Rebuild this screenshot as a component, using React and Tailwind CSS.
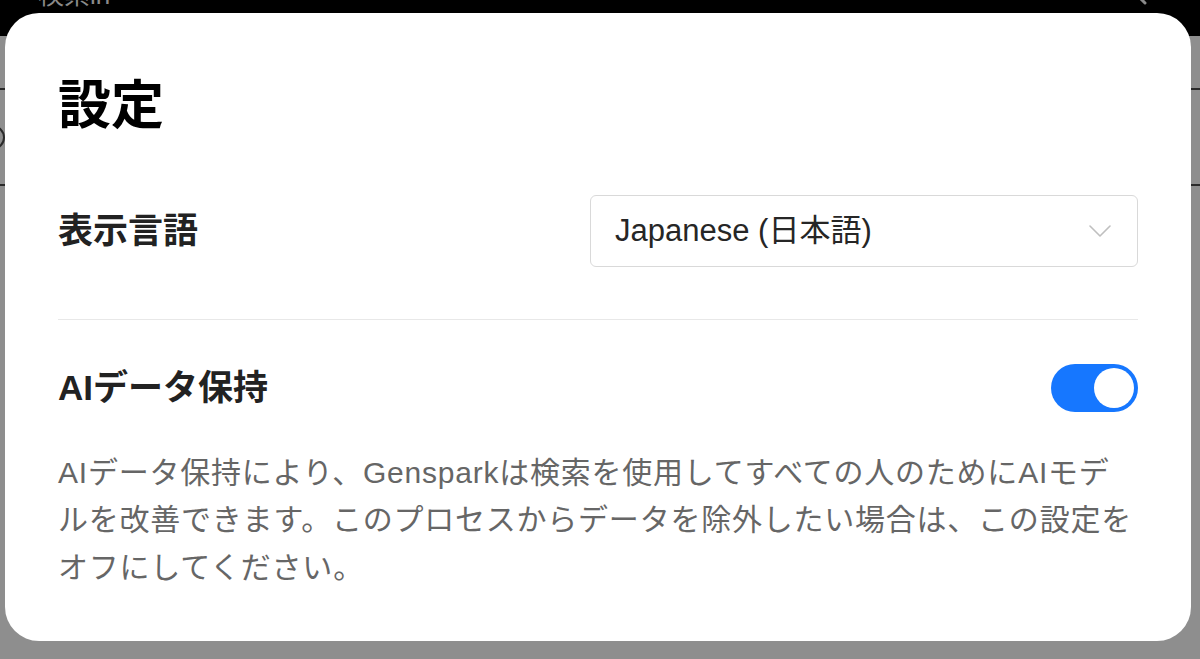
import React from 'react';

const FONT = "font-['Liberation_Sans','Noto_Sans_CJK_JP',sans-serif]";

function Toggle({ on = true }) {
  return (
    <div className={`flex items-center w-[87px] h-[48px] rounded-full px-[4px] ${on ? 'bg-[#1677ff] justify-end' : 'bg-[#d9d9d9] justify-start'}`}>
      <div className="w-[40px] h-[40px] rounded-full bg-white" />
    </div>
  );
}

function LanguageSelect() {
  return (
    <div className="flex items-center justify-between w-[548px] h-[72px] border border-[#d9d9d9] rounded-[6px] pl-[24px] pr-[26px] bg-white">
      <span className="text-[31px] text-[#262626]">Japanese (日本語)</span>
      <svg width="22" height="12" viewBox="0 0 22 12" fill="none">
        <path d="M1 1 L11 11 L21 1" stroke="#bfbfbf" strokeWidth="1.6" strokeLinecap="round" strokeLinejoin="round" />
      </svg>
    </div>
  );
}

export default function App() {
  return (
    <div className={`relative w-[1200px] h-[659px] overflow-hidden bg-[#8e8e8e] ${FONT}`}>
      {/* page behind the overlay */}
      <div className="flex items-start justify-between h-[36px] bg-black overflow-hidden">
        <span className="-mt-[20px] pl-[38px] text-[26px] leading-[30px] text-[#8a8a8a]">検索in</span>
        <svg className="-mt-[30px] mr-[48px]" width="40" height="40" viewBox="0 0 40 40" fill="none">
          <circle cx="16" cy="16" r="12" stroke="#8a8a8a" strokeWidth="3" />
          <path d="M25 25 L33 33" stroke="#8a8a8a" strokeWidth="3" strokeLinecap="round" />
        </svg>
      </div>
      <div className="mt-[52px] flex items-center h-[98px] border-y-2 border-[#2a2a2a]">
        <div className="-ml-[20px] w-[25px] h-[25px] rounded-full border-2 border-[#2a2a2a]" />
      </div>

      {/* settings modal */}
      <div className="absolute left-[5px] top-[13px] w-[1186px] h-[628px] bg-white rounded-[34px] px-[53px] pt-[66px]">
        <h1 className="text-[53px] leading-[53px] font-bold text-black">設定</h1>

        <div className="mt-[63px] flex items-center justify-between">
          <span className="text-[35px] font-bold text-[#222]">表示言語</span>
          <LanguageSelect />
        </div>

        <div className="mt-[52px] h-px bg-[#e8e8e8]" />

        <div className="mt-[42px] flex items-center justify-between">
          <span className="text-[35px] font-bold text-[#222]">AIデータ保持</span>
          <Toggle on />
        </div>

        <p className="mt-[34px] text-[30px] leading-[47.5px] tracking-[0.77px] text-[#666] whitespace-nowrap">
          AIデータ保持により、Gensparkは検索を使用してすべての人のためにAIモデ
          <br />
          ルを改善できます。このプロセスからデータを除外したい場合は、この設定を
          <br />
          オフにしてください。
        </p>
      </div>
    </div>
  );
}
